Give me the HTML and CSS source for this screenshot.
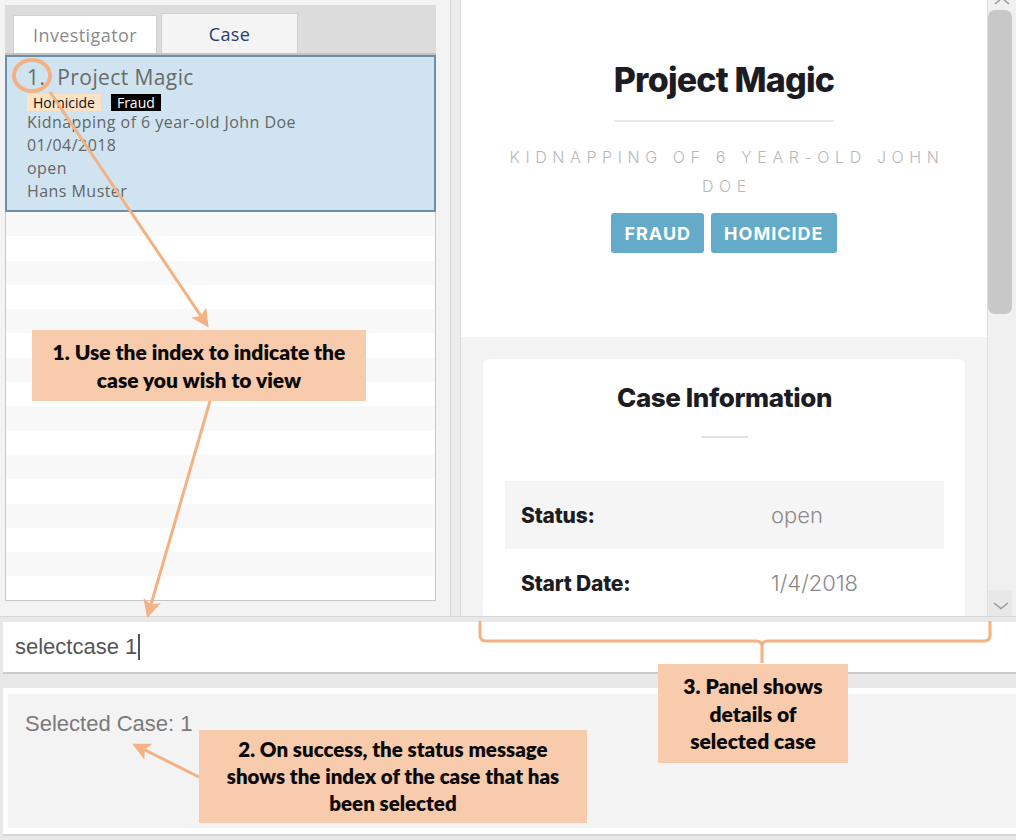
FILE: index.html
```html
<!DOCTYPE html>
<html>
<head>
<meta charset="utf-8">
<title>Case view</title>
<link rel="stylesheet" href="styles.css">
</head>
<body>
<div class="app">
  <div class="top">
    <div class="left">
      <div class="tabs">
        <div class="tab">Investigator</div>
        <div class="tab tab-active">Case</div>
      </div>
      <div class="list">
        <div class="card">
          <div class="card-title"><span class="card-idx">1.</span><span>Project Magic</span></div>
          <div class="card-tags"><span class="ltag ltag-homicide">Homicide</span><span class="ltag ltag-fraud">Fraud</span></div>
          <div class="card-line">Kidnapping of 6 year-old John Doe</div>
          <div class="card-line">01/04/2018</div>
          <div class="card-line">open</div>
          <div class="card-line">Hans Muster</div>
        </div>
        <div class="rows"></div>
      </div>
    </div>
    <div class="divider"></div>
    <div class="right">
      <div class="detail">
        <div class="head">
          <div class="title">Project Magic</div>
          <div class="rule"></div>
          <div class="subtitle">Kidnapping of 6 year-old John Doe</div>
          <div class="tags">
            <span class="tag">FRAUD</span>
            <span class="tag">HOMICIDE</span>
          </div>
        </div>
        <div class="body">
          <div class="info">
            <div class="info-title">Case Information</div>
            <div class="info-rule"></div>
            <div class="info-table">
              <div class="info-row info-row-shade">
                <div class="info-label">Status:</div>
                <div class="info-value">open</div>
              </div>
              <div class="info-row">
                <div class="info-label">Start Date:</div>
                <div class="info-value">1/4/2018</div>
              </div>
            </div>
          </div>
        </div>
      </div>
      <div class="scrollbar">
        <div class="sb-up"><svg width="28" height="10" viewBox="0 0 28 10"><polyline points="7,4 14,-2 21,4" fill="none" stroke="#9a9a9a" stroke-width="1.5"/></svg></div>
        <div class="sb-thumb"></div>
        <div class="sb-space"></div>
        <div class="sb-down"><svg width="26" height="26" viewBox="0 0 26 26"><polyline points="6,13 13,18.5 20,13" fill="none" stroke="#9a9a9a" stroke-width="1.5"/></svg></div>
      </div>
    </div>
  </div>

  <div class="cmd-area">
    <div class="cmd"><span>selectcase 1</span><span class="caret"></span></div>
  </div>

  <div class="status-area">
    <div class="status-outer">
      <div class="status">Selected Case: 1</div>
    </div>
  </div>
</div>

<div class="overlay">
  <svg class="marks" width="1016" height="840" viewBox="0 0 1016 840">
    <defs>
      <marker id="head" markerWidth="6" markerHeight="6" refX="5" refY="3" orient="auto" markerUnits="strokeWidth">
        <path d="M0,0 L6,3 L0,6 L1.4,3 Z" fill="#f4b183"/>
      </marker>
    </defs>
    <ellipse cx="32" cy="75.5" rx="18" ry="15.5" fill="none" stroke="#f4b183" stroke-width="4"/>
    <line x1="50" y1="92" x2="207" y2="325" stroke="#f4b183" stroke-width="3" marker-end="url(#head)"/>
    <line x1="210" y1="401" x2="148" y2="615" stroke="#f4b183" stroke-width="3" marker-end="url(#head)"/>
    <line x1="199" y1="777" x2="135" y2="745" stroke="#f4b183" stroke-width="3" marker-end="url(#head)"/>
    <path d="M480,621 V635 Q480,641 486,641 H756 Q762,641 762,646 V663 M762,646 Q762,641 768,641 H984 Q990,641 990,635 V621" fill="none" stroke="#f4b183" stroke-width="3"/>
  </svg>
  <div class="callout callout-1">1. Use the index to indicate the<br>case you wish to view</div>
  <div class="callout callout-2">2. On success, the status message<br>shows the index of the case that has<br>been selected</div>
  <div class="callout callout-3">3. Panel shows<br>details of<br>selected case</div>
</div>
</body>
</html>
```

FILE: styles.css
```css
html, body {
  margin: 0;
  padding: 0;
}

body {
  width: 1016px;
  height: 840px;
  overflow: hidden;
  position: relative;
  background: #ececec;
  font-family: "Open Sans", "DejaVu Sans", sans-serif;
}

.app {
  display: flex;
  flex-direction: column;
  height: 840px;
}

/* ---------- top area ---------- */
.top {
  display: flex;
  height: 616px;
  flex-shrink: 0;
  background: #f3f3f3;
}

.left {
  width: 450px;
  flex-shrink: 0;
  box-sizing: border-box;
  padding: 5px 0 0 5px;
}

.tabs {
  width: 431px;
  height: 50px;
  box-sizing: border-box;
  background: #dcdcdc;
  border-bottom: 2px solid #c3c3c3;
  display: flex;
  align-items: flex-end;
  gap: 4px;
  padding-left: 8px;
}

.tab {
  width: 144px;
  height: 38px;
  box-sizing: border-box;
  background: #fff;
  border: 1px solid #d0d0d0;
  border-bottom: 0;
  border-radius: 2px 2px 0 0;
  display: flex;
  align-items: center;
  justify-content: center;
  font-size: 18px;
  letter-spacing: 0.4px;
  color: #8a8a8a;
}

.tab-active {
  width: 137px;
  height: 40px;
  background: #f4f4f4;
  color: #1f3d6f;
}

.list {
  width: 431px;
  height: 546px;
  box-sizing: border-box;
  border: 1px solid #c8c8c8;
  border-top: 0;
  background: #fff;
  display: flex;
  flex-direction: column;
}

.card {
  margin: 0 -1px;
  height: 157px;
  flex-shrink: 0;
  box-sizing: border-box;
  border: 2px solid #6b90aa;
  background: #cfe4f0;
  padding: 6px 0 0 20px;
  color: #666;
}

.card-title {
  font-size: 21px;
  line-height: 28px;
  letter-spacing: 0.4px;
  color: #6a6a6a;
  display: flex;
}

.card-idx {
  margin-right: 12px;
}

.card-tags {
  display: flex;
  gap: 10px;
  margin-top: 3px;
  height: 17px;
}

.ltag {
  height: 17px;
  line-height: 17px;
  font-size: 14px;
  padding: 0 6px;
}

.ltag-homicide {
  background: #fde2c4;
  color: #111;
}

.ltag-fraud {
  background: #000;
  color: #fff;
}

.card-line {
  font-size: 16px;
  letter-spacing: 0.45px;
  line-height: 23px;
  color: #666;
}

.rows {
  flex: 1;
  background: repeating-linear-gradient(to bottom, #f8f8f8 0, #f8f8f8 24.3px, #ffffff 24.3px, #ffffff 48.6px);
}

.divider {
  width: 11px;
  flex-shrink: 0;
  box-sizing: border-box;
  border-left: 1px solid #d2d2d2;
  border-right: 1px solid #dadada;
  background: #ececec;
}

.right {
  flex: 1;
  display: flex;
  min-width: 0;
}

.detail {
  flex: 1;
  display: flex;
  flex-direction: column;
  overflow: hidden;
  background: #f3f3f3;
  font-family: "Inter", "Lato", sans-serif;
}

.head {
  height: 337px;
  flex-shrink: 0;
  box-sizing: border-box;
  background: #fff;
  padding-top: 60px;
  display: flex;
  flex-direction: column;
  align-items: center;
}

.title {
  font-size: 34px;
  font-weight: 800;
  line-height: 40px;
  letter-spacing: -0.8px;
  color: #1c1c22;
}

.rule {
  width: 220px;
  height: 2px;
  background: #e8e8e8;
  margin-top: 20px;
}

.subtitle {
  margin-top: 21px;
  width: 470px;
  box-sizing: border-box;
  padding-left: 6px;
  text-align: center;
  text-transform: uppercase;
  font-size: 16px;
  font-weight: 300;
  letter-spacing: 5.6px;
  line-height: 29px;
  color: #b8b8b8;
}

.tags {
  margin-top: 12px;
  display: flex;
  gap: 7px;
}

.tag {
  height: 40px;
  box-sizing: border-box;
  padding: 0 13px;
  background: #63abc8;
  color: #fff;
  font-weight: 700;
  font-size: 18px;
  letter-spacing: 1px;
  border-radius: 3px;
  display: flex;
  align-items: center;
}

.body {
  flex: 1;
  padding: 22px 22px 0;
  overflow: hidden;
}

.info {
  background: #fff;
  border-radius: 6px 6px 0 0;
  padding: 23px 21px 0 22px;
  height: 400px;
}

.info-title {
  text-align: center;
  font-size: 26px;
  font-weight: 800;
  line-height: 32px;
  letter-spacing: -0.4px;
  color: #1c1c22;
}

.info-rule {
  width: 47px;
  height: 2px;
  background: #e2e2e2;
  margin: 22px auto 0;
}

.info-table {
  margin-top: 43px;
}

.info-row {
  display: flex;
  align-items: center;
  height: 68px;
  padding-left: 16px;
}

.info-row-shade {
  background: #f5f5f5;
}

.info-label {
  width: 250px;
  font-size: 21px;
  font-weight: 800;
  letter-spacing: -0.2px;
  color: #1c1c22;
}

.info-value {
  font-size: 22px;
  font-weight: 300;
  color: #8a8a8a;
}

.scrollbar {
  width: 29px;
  flex-shrink: 0;
  box-sizing: border-box;
  border-left: 1px solid #e0e0e0;
  background: #f0f0f0;
  display: flex;
  flex-direction: column;
  padding-right: 4px;
}

.sb-up {
  height: 10px;
  overflow: hidden;
}

.sb-up svg, .sb-down svg {
  display: block;
}

.sb-thumb {
  height: 304px;
  background: #c8c8c8;
  border-radius: 7px;
}

.sb-space {
  flex: 1;
}

.sb-down {
  height: 26px;
  background: #e8e8e8;
}

/* ---------- command box ---------- */
.cmd-area {
  border-top: 1px solid #d6d6d6;
  padding: 5px 0 0 3px;
  background: #e8e8e8;
}

.cmd {
  height: 50px;
  background: #fff;
  border-bottom: 2px solid #cacaca;
  padding-left: 12px;
  display: flex;
  align-items: center;
  font-family: "Liberation Sans", Arial, sans-serif;
  font-size: 22px;
  color: #555;
}

.caret {
  width: 1.5px;
  height: 26px;
  background: #555;
  margin-left: 1px;
}

/* ---------- status ---------- */
.status-area {
  padding: 14px 0 0 3px;
  background: #e8e8e8;
  flex: 1;
}

.status-outer {
  background: #fff;
  padding: 6px 0 6px 5px;
  border-bottom: 2px solid #d6d6d6;
}

.status {
  height: 134px;
  box-sizing: border-box;
  background: #f3f3f3;
  padding: 17px 0 0 17px;
  font-family: "Liberation Sans", Arial, sans-serif;
  font-size: 22px;
  line-height: 25px;
  color: #7a7a7a;
}

/* ---------- annotations overlay ---------- */
.overlay {
  position: absolute;
  left: 0;
  top: 0;
  width: 1016px;
  height: 840px;
  pointer-events: none;
}

.marks {
  position: absolute;
  left: 0;
  top: 0;
}

.callout {
  position: absolute;
  box-sizing: border-box;
  background: #f8cbad;
  color: #0a0a0a;
  font-family: "Lato", "Open Sans", sans-serif;
  font-weight: 800;
  text-align: center;
  display: flex;
  align-items: center;
  justify-content: center;
}

.callout-1 {
  left: 32px;
  top: 330px;
  width: 334px;
  height: 71px;
  font-size: 21px;
  line-height: 28px;
}

.callout-2 {
  left: 199px;
  top: 730px;
  width: 388px;
  height: 93px;
  font-size: 20.5px;
  line-height: 27px;
}

.callout-3 {
  left: 658px;
  top: 664px;
  width: 190px;
  height: 99px;
  font-size: 21px;
  line-height: 27.5px;
}
```
